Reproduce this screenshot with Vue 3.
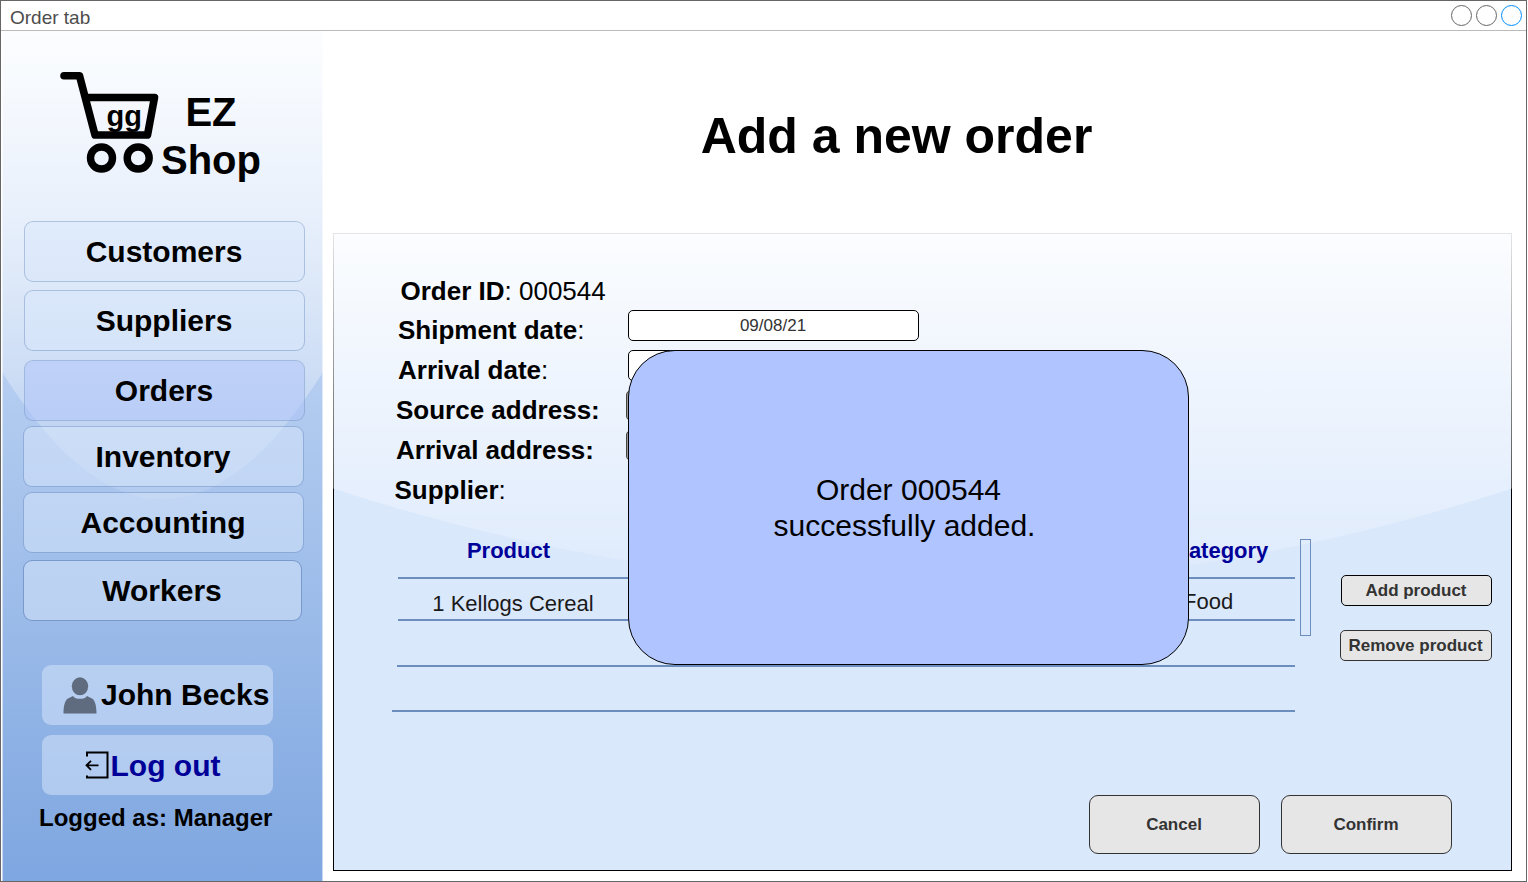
<script setup>
const navItems = [
  { label: 'Customers', cls: 'customers' },
  { label: 'Suppliers', cls: 'suppliers' },
  { label: 'Orders', cls: 'orders' },
  { label: 'Inventory', cls: 'inventory' },
  { label: 'Accounting', cls: 'accounting' },
  { label: 'Workers', cls: 'workers' },
]
const fields = [
  { label: 'Order ID', tail: ': 000544', cls: 'f-id' },
  { label: 'Shipment date', tail: ':', cls: 'f-ship', input: '09/08/21' },
  { label: 'Arrival date', tail: ':', cls: 'f-arr', input: ' ' },
  { label: 'Source address:', tail: '', cls: 'f-src', input: ' ' },
  { label: 'Arrival address:', tail: '', cls: 'f-dst', input: ' ' },
  { label: 'Supplier', tail: ':', cls: 'f-sup' },
]
</script>

<template>
  <div class="window">
    <header class="titlebar">
      <span class="tab-title">Order tab</span>
      <svg class="controls" width="75" height="24" viewBox="0 0 75 24" fill="none">
        <circle cx="11.500" cy="11.500" r="10" stroke="#666" />
        <circle cx="36.500" cy="11.500" r="10" stroke="#666" />
        <circle cx="61.500" cy="11.500" r="10" stroke="#008cff" />
      </svg>
    </header>

    <div class="body">
      <aside class="sidebar">
        <svg class="backdrop" viewBox="0 0 321 852" width="321" height="852">
          <defs>
            <linearGradient id="side" x1="0" y1="0" x2="0" y2="1">
              <stop offset="0" stop-color="#dae8fc" />
              <stop offset="1" stop-color="#7ea6e0" />
            </linearGradient>
            <linearGradient id="glass" x1="0" y1="0" x2="0" y2="1">
              <stop offset="0" stop-color="#fff" stop-opacity="0.9" />
              <stop offset="1" stop-color="#fff" stop-opacity="0.1" />
            </linearGradient>
          </defs>
          <rect x="0" y="0" width="321" height="852" fill="url(#side)" />
          <path d="M0 0V341Q160.500 596 321 341V0Z" fill="url(#glass)" />
          <path d="M0.500 0V852M320.500 0V852" stroke="#fff" stroke-opacity="0.55" />
        </svg>

        <div class="brand">
          <svg class="cart" width="102" height="106" viewBox="0 0 102 106" fill="none" stroke="#000" stroke-linecap="round" stroke-linejoin="round">
            <path d="M5 5.700H20.500L36 65H88.500L95.500 27.500H27" stroke-width="7.600" />
            <circle cx="42.500" cy="88" r="11" stroke-width="7.400" />
            <circle cx="79.200" cy="88" r="11" stroke-width="7.400" />
          </svg>
          <span class="cart-tag">gg</span>
          <div class="brand-name">EZ<br />Shop</div>
        </div>

        <nav class="nav">
          <button v-for="n in navItems" :key="n.label" class="nav-item" :class="n.cls">{{ n.label }}</button>
        </nav>

        <div class="account user">
          <svg width="34" height="37" viewBox="0 0 34 37" fill="#5f6b7e">
            <ellipse cx="17" cy="9.300" rx="8.200" ry="9" />
            <path d="M0.500 36.500C0.500 29 2 23 5 21.500L10 19C12 22.800 22 22.800 24 19L29 21.500C32 23 33.500 29 33.500 36.500Z" />
          </svg>
          <span>John Becks</span>
        </div>
        <div class="account logout">
          <svg width="24" height="28" viewBox="0 0 24 28" fill="none" stroke="#000" stroke-width="2">
            <path d="M2 5.500V1.500H22.500V26.500H2V24.500" />
            <path d="M13.500 14.300H1.500M6 9.800L1.500 14.300L6 18.800" stroke-width="1.800" />
          </svg>
          <span>Log out</span>
        </div>
        <div class="role">Logged as: Manager</div>
      </aside>

      <main class="main">
        <h1>Add a new order</h1>

        <section class="panel">
          <svg class="backdrop" viewBox="0 0 1179 638" width="1179" height="638">
            <rect x="0.5" y="0.5" width="1178" height="637" fill="#dae8fc" stroke="#000" />
            <path d="M0 0V255.500Q589.500 448 1179 255.500V0Z" fill="url(#glass)" />
          </svg>

          <div class="fields">
            <div v-for="f in fields" :key="f.label" class="field" :class="f.cls">
              <div class="label"><b>{{ f.label }}</b>{{ f.tail }}</div>
              <div v-if="f.input" class="input">{{ f.input }}</div>
            </div>
          </div>

          <div class="lower">
            <div class="table">
              <div class="row head"><span class="c1">Product</span><span class="c2">Category</span></div>
              <div class="row first"><span class="c1">1 Kellogs Cereal</span><span class="c2">Food</span></div>
              <div class="row second"></div>
              <div class="row third"></div>
            </div>
            <div class="scroll"></div>
            <div class="side-actions">
              <button class="btn add">Add product</button>
              <button class="btn remove">Remove product</button>
            </div>
          </div>

          <div class="actions">
            <button class="btn big">Cancel</button>
            <button class="btn big">Confirm</button>
          </div>

          <div class="modal">
            <p>Order 000544<br /><span class="msg">successfully added.</span></p>
          </div>
        </section>
      </main>
    </div>
  </div>
</template>

<style>
body { background: #fff; }
</style>

<style scoped>
.window, .window * { box-sizing: border-box; }
.window {
  width: 1527px;
  height: 882px;
  border: 1px solid #666;
  background: #fff;
  font-family: "Liberation Sans", Arial, sans-serif;
  color: #000;
  overflow: hidden;
}
button {
  font-family: inherit;
  margin: 0;
  padding: 0;
}
.titlebar {
  height: 30px;
  border-bottom: 1px solid #bbb;
  display: flex;
  justify-content: space-between;
  align-items: center;
  padding: 0 1px 0 9px;
}
.tab-title {
  font-size: 19px;
  line-height: 22px;
  color: #4d4d4d;
  margin-top: 5px;
}
.controls { margin-top: 1px; }
.body { display: flex; height: 851px; }

.sidebar {
  position: relative;
  width: 321px;
  height: 852px;
  margin-left: 1px;
  flex: none;
  isolation: isolate;
}
.backdrop {
  position: absolute;
  top: 0;
  left: 0;
  z-index: -1;
  display: block;
}
.brand {
  position: relative;
  height: 190px;
}
.cart { position: absolute; left: 57.400px; top: 39px; }
.cart-tag {
  position: absolute;
  left: 104.500px;
  top: 66.500px;
  font: bold 29px/36px "Liberation Sans", Arial, sans-serif;
}
.brand-name {
  position: absolute;
  left: 149px;
  top: 57px;
  width: 120px;
  text-align: center;
  font-size: 40px;
  line-height: 48px;
  font-weight: bold;
}
.nav { display: flex; flex-direction: column; padding-left: 22px; }
.nav-item {
  width: 281px;
  height: 61px;
  border: 1px solid rgba(108, 142, 191, 0.45);
  border-radius: 9px;
  background: rgba(218, 232, 252, 0.5);
  background-clip: padding-box;
  font-size: 30px;
  font-weight: bold;
  color: #000;
  padding-right: 1px;
}
.suppliers { margin-top: 8px; }
.orders { margin-top: 9px; background-color: rgba(176, 196, 250, 0.5); }
.inventory { margin: 5px 0 0 -1px; }
.accounting { margin: 5px 0 0 -1px; }
.workers { margin: 7px 0 0 -1px; width: 279px; border-color: rgba(108, 142, 191, 0.75); }

.account {
  width: 231px;
  height: 60px;
  margin-left: 40px;
  border-radius: 9px;
  background: rgba(218, 232, 252, 0.5);
  display: flex;
  align-items: center;
  font-size: 30px;
  font-weight: bold;
  white-space: nowrap;
}
.user { margin-top: 44px; padding-left: 21px; gap: 4px; }
.logout { margin-top: 10px; padding-left: 43px; gap: 1.500px; color: #000099; }
.logout span { margin-top: 1px; }
.role {
  margin: 9px 0 0 37px;
  font-size: 24px;
  line-height: 28px;
  font-weight: bold;
  white-space: nowrap;
}

.main { flex: 1; padding-left: 10px; }
h1 {
  margin: 0;
  height: 202px;
  padding: 7px 66px 0 0;
  display: flex;
  align-items: center;
  justify-content: center;
  font-size: 50px;
  line-height: 60px;
}
.panel {
  position: relative;
  isolation: isolate;
  width: 1179px;
  height: 638px;
}
.fields { padding-top: 37px; }
.field { display: flex; height: 40px; align-items: center; }
.label { width: 229px; font-size: 26px; line-height: 30px; white-space: nowrap; }
.f-id { padding-left: 67.500px; }
.f-id .label { margin-top: 2px; }
.f-ship { padding-left: 65px; }
.f-arr { padding-left: 65px; }
.f-src { padding-left: 63px; }
.f-dst { padding-left: 63px; }
.f-sup { padding-left: 61.500px; }
.f-ship .label, .f-arr .label, .f-src .label, .f-dst .label { width: 230px; }
.input {
  width: 291px;
  height: 31px;
  margin-top: -9px;
  border: 1px solid #000;
  border-radius: 5px;
  background: #fff;
  font-size: 17px;
  line-height: 29px;
  text-align: center;
  color: #333;
}
.f-ship .input { padding-right: 1px; }
.f-src .input, .f-dst .input { border-color: #444; background: #999; }

.lower { display: flex; margin-top: 28px; height: 174px; padding-left: 59px; }
.table { width: 903px; }
.row {
  display: flex;
  align-items: center;
  border-bottom: 2px solid #6c8ebf;
  margin-left: 6px;
  font-size: 22px;
}
.c1 { width: 230px; text-align: center; }
.head { height: 41px; padding-bottom: 14px; font-weight: bold; color: #000099; }
.head .c1 { width: 221px; }
.head .c2 { margin-left: 554px; }
.first { height: 42px; padding-top: 9px; color: #1a1a1a; }
.first .c2 { margin-left: 555px; margin-top: -4px; }
.second { height: 46px; margin-left: 5px; }
.third { height: 45px; margin-left: 0; }
.scroll {
  width: 11px;
  height: 97px;
  margin: 1px 0 0 5px;
  border: 1px solid #6c8ebf;
}
.side-actions { margin: 37px 0 0 29px; display: flex; flex-direction: column; }
.btn {
  width: 152px;
  height: 31px;
  border: 1px solid #000;
  border-radius: 5px;
  background: #e6e6e6;
  color: #333;
  font-size: 17px;
  font-weight: bold;
  padding-right: 1px;
}
.add { width: 151px; margin-left: 1px; }
.remove { margin-top: 24px; border-color: #333; }
.actions { display: flex; gap: 21px; padding-left: 756px; margin-top: 83px; }
.big { width: 171px; height: 59px; border-radius: 9px; border-color: #333; }

.modal {
  position: absolute;
  left: 295px;
  top: 117px;
  width: 561px;
  height: 315px;
  border: 1px solid #000;
  border-radius: 47px;
  background: #b0c4ff;
  display: flex;
  align-items: center;
  justify-content: center;
  text-align: center;
  font-size: 30px;
  line-height: 36px;
}
.modal p { margin: 1px 0 0; }
.msg { padding-right: 8px; }
</style>
